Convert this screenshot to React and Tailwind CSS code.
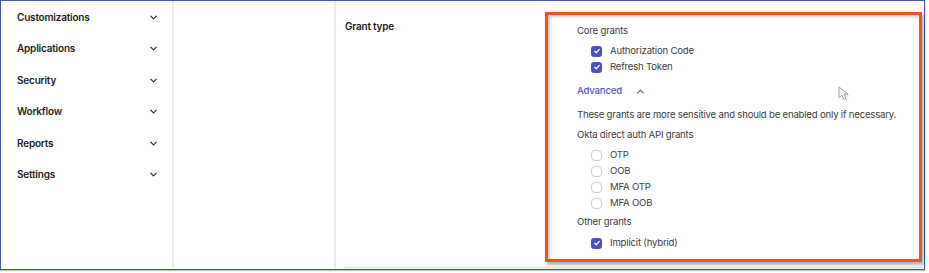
import { ChevronDown, ChevronUp } from 'lucide-react';

const navItems = ['Customizations', 'Applications', 'Security', 'Workflow', 'Reports', 'Settings'];

function CheckBox({ checked }) {
  if (checked) {
    return (
      <span className="flex h-[11px] w-[11px] items-center justify-center rounded-[3px] bg-[#4b50c2]">
        <svg viewBox="0 0 12 12" className="h-[8px] w-[8px]" fill="none" stroke="white" strokeWidth="2" strokeLinecap="round" strokeLinejoin="round">
          <path d="M2.5 6.2l2.4 2.4 4.6-5" />
        </svg>
      </span>
    );
  }
  return <span className="block h-[11px] w-[11px] rounded-[4px] border border-[#cfcfd3] bg-white" />;
}

function Option({ label, checked }) {
  return (
    <div className="flex h-[16px] items-center gap-[8px] pl-[14px]">
      <CheckBox checked={checked} />
      <span>{label}</span>
    </div>
  );
}

export default function App() {
  return (
    <div className="relative h-[273px] w-[929px] overflow-hidden bg-white font-['Inter',sans-serif] text-[9.5px] tracking-[-0.2px] text-[#3c3c40]">
      <div className="flex h-[270px] w-[925px] border border-[#3f55b8] shadow-[0_1px_1px_rgba(0,0,0,0.25)]">
        <aside className="w-[173px] shrink-0 border-r-2 border-[#ececec] pt-[9px]">
          {navItems.map((item) => (
            <div key={item} className="flex h-[31.4px] items-start justify-between pl-[16px] pr-[13px]">
              <span className="text-[10px] font-semibold text-[#1d1d21]">{item}</span>
              <ChevronDown className="mt-[2px] h-[11px] w-[11px] text-[#2a2a2e]" strokeWidth={2.5} />
            </div>
          ))}
        </aside>
        <div className="w-[162px] shrink-0 border-r-2 border-[#ececec]" />
        <main className="flex flex-1 pl-[9px]">
          <div className="mb-[1px] flex flex-1 border-b border-[#e2e2e2]">
            <div className="w-[232px] shrink-0 pt-[18px] text-[10px] font-semibold text-[#1d1d21]">Grant type</div>
            <div className="flex-1 whitespace-nowrap pt-[22px] text-[9.6px] leading-[16px]">
              <div>Core grants</div>
              <div className="mt-[4px]">
                <Option label="Authorization Code" checked />
                <Option label="Refresh Token" checked />
              </div>
              <div className="mt-[8px] flex items-center gap-[13px] font-medium text-[#4c56b6]">
                <span>Advanced</span>
                <ChevronUp className="h-[11px] w-[11px]" strokeWidth={2.5} />
              </div>
              <div className="mt-[8px]">These grants are more sensitive and should be enabled only if necessary.</div>
              <div className="mt-[4px]">Okta direct auth API grants</div>
              <div className="mt-[4px]">
                <Option label="OTP" />
                <Option label="OOB" />
                <Option label="MFA OTP" />
                <Option label="MFA OOB" />
              </div>
              <div className="mt-[3px]">Other grants</div>
              <div className="mt-[5px]">
                <Option label="Implicit (hybrid)" checked />
              </div>
            </div>
          </div>
        </main>
      </div>

      <svg className="absolute left-[837px] top-[85px] h-[18px] w-[13px]" viewBox="0 0 13 18" fill="none">
        <path d="M3 3v11l3-3 2 4.5 2-1-2-4.5h4z" fill="#d8d8d8" opacity="0.6" transform="translate(1.5 1.5)" />
        <path d="M2 2v11l3-3 2 4.5 2-1-2-4.5h4z" fill="white" stroke="#9a9a9a" strokeWidth="0.9" strokeLinejoin="round" />
      </svg>

      <div className="absolute left-[545px] top-[12px] h-[250px] w-[377px] border-[3px] border-[#f4511e] shadow-[2px_3px_3px_rgba(0,0,0,0.3),inset_2px_2px_3px_rgba(0,0,0,0.2)]" />
    </div>
  );
}
